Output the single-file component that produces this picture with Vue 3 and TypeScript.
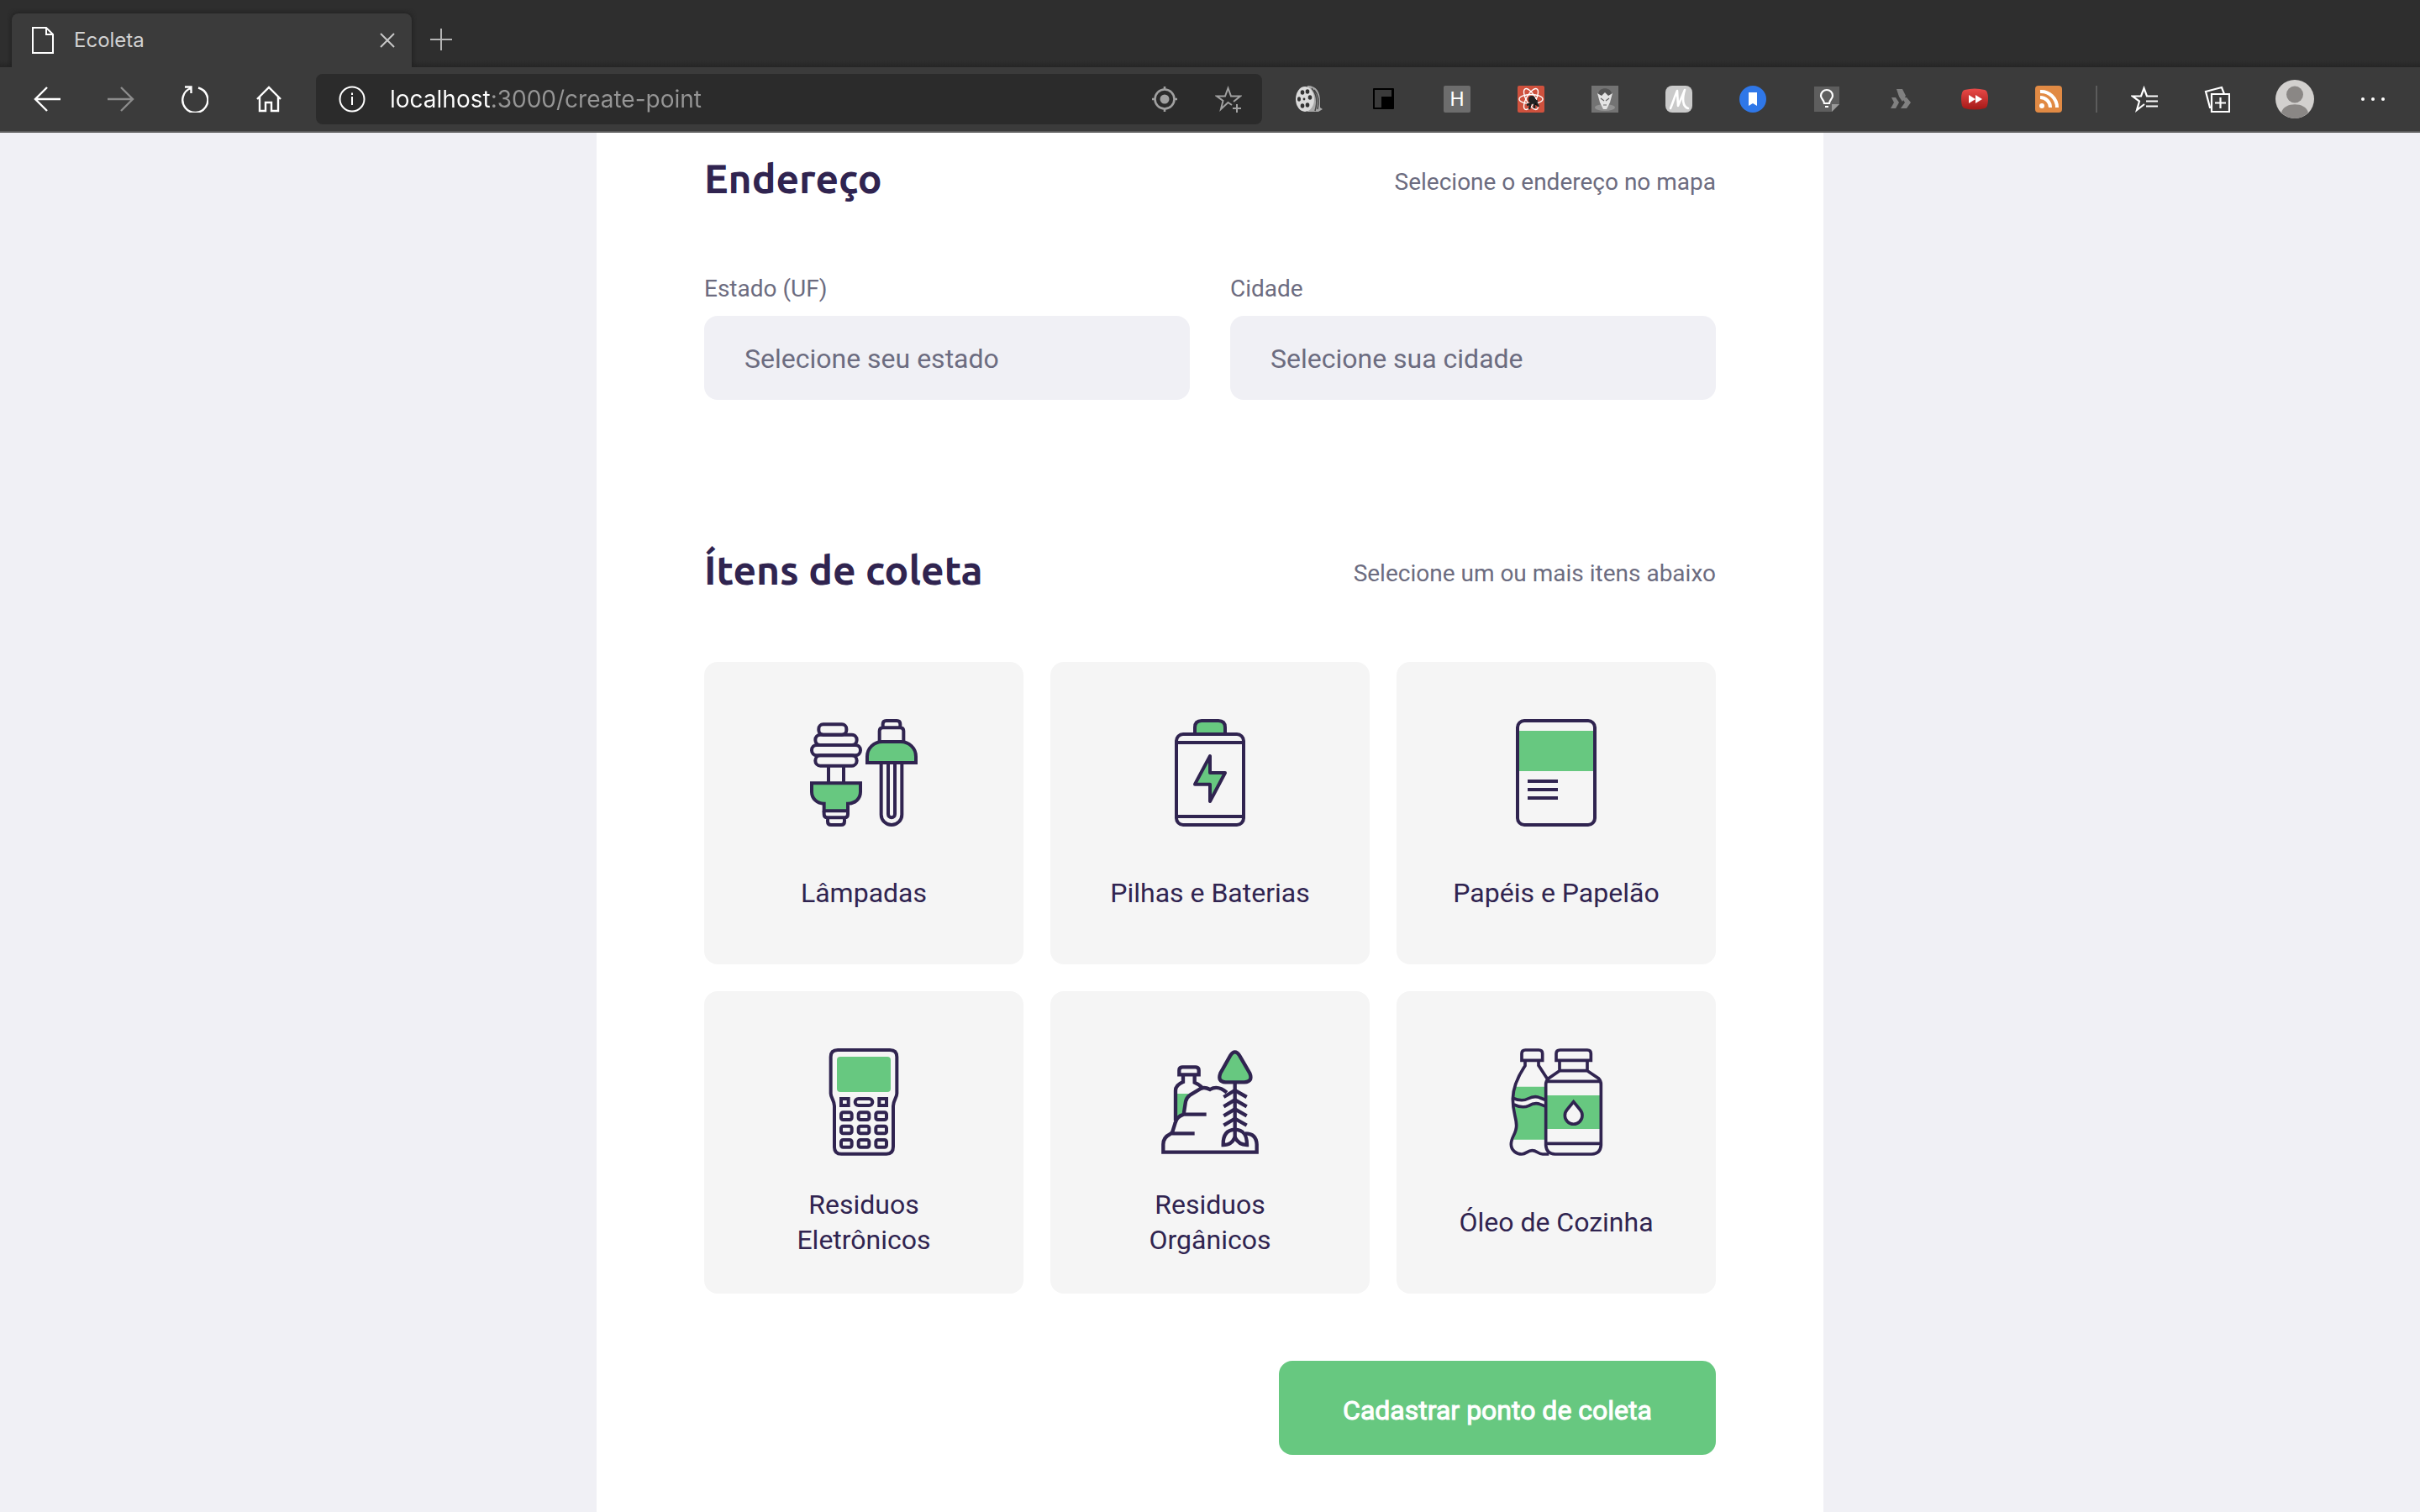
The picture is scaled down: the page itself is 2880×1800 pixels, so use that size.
<script setup lang="ts">
import { ref } from 'vue'

interface CollectItem {
  id: string
  title: string
  viewBox: string
  stroke: number
}

const items: CollectItem[] = [
  { id: 'lamps', title: 'Lâmpadas', viewBox: '132 108 384 384', stroke: 12 },
  { id: 'batteries', title: 'Pilhas e Baterias', viewBox: '78 108 384 384', stroke: 12 },
  { id: 'paper', title: 'Papéis e Papelão', viewBox: '84 108 384 384', stroke: 12 },
  { id: 'electronics', title: 'Residuos Eletrônicos', viewBox: '72 114 384 384', stroke: 12 },
  { id: 'organic', title: 'Residuos Orgânicos', viewBox: '78 114 384 384', stroke: 13 },
  { id: 'oil', title: 'Óleo de Cozinha', viewBox: '84 114 384 384', stroke: 11 },
]

const keyColumns = [183, 245, 307]
const keyRows = [343, 392, 441]
const ribs = [264, 298, 331, 365]

const url = ref('localhost:3000/create-point')
const uf = ref('')
const city = ref('')
</script>

<template>
  <div class="window">
    <header class="browser">
      <div class="tabs">
        <div class="tab">
          <svg class="page-icon" viewBox="0 0 26 32" fill="none" stroke="#fff" stroke-width="2"><path d="M1 1H17L25 9V31H1ZM17 1V9H25" /></svg>
          <span class="tab-title">Ecoleta</span>
          <button class="plain" type="button" aria-label="Fechar guia">
            <svg width="18" height="18" viewBox="0 0 18 18" stroke="#c8c8c8" stroke-width="2"><path d="M1 1L17 17M17 1L1 17" /></svg>
          </button>
        </div>
        <button class="plain new-tab" type="button" aria-label="Nova guia">
          <svg width="26" height="26" viewBox="0 0 26 26" stroke="#b4b4b4" stroke-width="2"><path d="M13 0V26M0 13H26" /></svg>
        </button>
      </div>

      <div class="toolbar">
        <nav class="nav">
          <button class="plain" type="button" aria-label="Voltar">
            <svg width="32" height="32" viewBox="0 0 32 32" fill="none" stroke="#fff" stroke-width="2.4"><path d="M32 16H2M16 2L2 16L16 30" /></svg>
          </button>
          <button class="plain" type="button" aria-label="Avançar">
            <svg width="32" height="32" viewBox="0 0 32 32" fill="none" stroke="#8c8c8c" stroke-width="2.4"><path d="M0 16H30M16 2L30 16L16 30" /></svg>
          </button>
          <button class="plain" type="button" aria-label="Atualizar">
            <svg width="32" height="32" viewBox="0 0 32 32" fill="none" stroke="#fff" stroke-width="2.4"><path d="M11 3A15 15 0 1 0 20 2.500M4 1.500H11.500V9" /></svg>
          </button>
          <button class="plain" type="button" aria-label="Início">
            <svg width="32" height="32" viewBox="0 0 32 32" fill="none" stroke="#fff" stroke-width="2.400"><path d="M2 16L16 2L30 16M5 13V30H12V20H19V30H27V13" /></svg>
          </button>
        </nav>

        <div class="address">
          <svg width="32" height="32" viewBox="0 0 32 32" fill="none" stroke="#fff" stroke-width="2"><circle cx="16" cy="16" r="14.500" /><path d="M16 13V23M16 8.500V11" /></svg>
          <input v-model="url" class="url" type="text" aria-label="Endereço da página" />
          <button class="plain" type="button" aria-label="Localização">
            <svg width="32" height="32" viewBox="0 0 32 32" fill="none" stroke="#a0a0a0" stroke-width="2.600"><circle cx="16" cy="16" r="11.500" /><circle cx="16" cy="16" r="5.500" fill="#a0a0a0" stroke="none" /><path d="M16 1V5M16 27V31M1 16H5M27 16H31" /></svg>
          </button>
          <button class="plain" type="button" aria-label="Adicionar aos favoritos">
            <svg width="32" height="32" viewBox="0 0 32 32" fill="none" stroke="#a0a0a0" stroke-width="2"><path d="M20 23L15.500 20L7 28L9.500 18L2 12.500H12L15.500 3L19 12.500H30L22 19M26 22V32M21 27H31" /></svg>
          </button>
        </div>

        <div class="extensions">
          <button class="plain" type="button" aria-label="Filmes">
            <svg width="32" height="32" viewBox="0 0 32 32"><path d="M14 0C25 0 29 8 29 18V26L32 28L27 31H14Z" fill="#a8a8a8" /><path d="M19 3C25 10 26 20 23 30M22 5C28 12 28 20 26 28" fill="none" stroke="#444" stroke-width="1.500" /><ellipse cx="11" cy="16" rx="11" ry="15" fill="#dadada" /><g fill="#333"><ellipse cx="8" cy="8" rx="2.300" ry="2.800" /><ellipse cx="14" cy="7" rx="2.300" ry="2.800" /><ellipse cx="4" cy="16" rx="2" ry="2.800" /><ellipse cx="17" cy="14" rx="2.300" ry="2.800" /><ellipse cx="8" cy="24" rx="2.300" ry="2.800" /><ellipse cx="14" cy="23" rx="2.300" ry="2.800" /><circle cx="10" cy="16" r="1.400" /></g></svg>
          </button>
          <button class="plain" type="button" aria-label="Painel">
            <svg width="32" height="32" viewBox="0 0 32 32"><rect x="4" y="3" width="25" height="25" rx="1" fill="#000" /><path d="M6 5H26V13H14V26H6Z" fill="#3b3b3b" /></svg>
          </button>
          <button class="plain letter" type="button">H</button>
          <button class="plain" type="button" aria-label="React">
            <svg width="32" height="32" viewBox="0 0 32 32"><rect width="32" height="32" rx="2" fill="#cf513d" /><g fill="none" stroke="#fff" stroke-width="1.400"><ellipse cx="16" cy="16" rx="14" ry="5.500" /><ellipse cx="16" cy="16" rx="14" ry="5.500" transform="rotate(60 16 16)" /><ellipse cx="16" cy="16" rx="14" ry="5.500" transform="rotate(120 16 16)" /></g><path d="M13 18L21 17L25 25M16 19L14 28M20 19L20 27M11 23L24 18" stroke="#222" stroke-width="2.500" /><circle cx="17" cy="16" r="4" fill="#222" /></svg>
          </button>
          <button class="plain" type="button" aria-label="Máscara">
            <svg width="32" height="32" viewBox="0 0 32 32"><rect width="32" height="32" fill="#737373" /><ellipse cx="16" cy="26" rx="12" ry="4" fill="#929292" /><path d="M8 10C8 1 24 1 24 10L22 19H10Z" fill="#555" /><path d="M7 9L12 12L16 8L20 12L25 9L22 20L18 28H14L10 20Z" fill="#e4e4e4" /><path d="M11 15L15 18M21 15L17 18M14 23H18" stroke="#666" stroke-width="1.200" /></svg>
          </button>
          <button class="plain" type="button" aria-label="Notas">
            <svg width="32" height="32" viewBox="0 0 32 32"><rect width="32" height="32" rx="8" fill="#cacaca" /><path d="M6 27C9 20 11 13 14 6L15 24L23 5C20 15 20 25 27 27" fill="none" stroke="#fff" stroke-width="2.600" stroke-linejoin="round" stroke-linecap="round" /></svg>
          </button>
          <button class="plain" type="button" aria-label="Marcadores">
            <svg width="32" height="32" viewBox="0 0 32 32"><circle cx="16" cy="16" r="16" fill="#2f77e8" /><path d="M11 8H21V24L16 21L11 24Z" fill="#fff" /></svg>
          </button>
          <button class="plain" type="button" aria-label="Ideias">
            <svg width="32" height="32" viewBox="0 0 32 32"><path d="M1 1H31V22L22 31H1Z" fill="#5e5e5e" /><path d="M22 31V22H31Z" fill="#999" /><path d="M13 21C13 17 9 16 9 12A7 7 0 0 1 23 12C23 16 19 17 19 21ZM14 25H18" fill="none" stroke="#fff" stroke-width="2.200" /></svg>
          </button>
          <button class="plain" type="button" aria-label="Fluxo">
            <svg width="32" height="32" viewBox="0 0 32 32" fill="#808080"><path d="M11 4H18L22 12L18 19L14 13Z" /><path d="M5 14H10L14 20L10 27H4L8 20ZM17 14H23L28 20L23 27H16L21 20Z" /></svg>
          </button>
          <button class="plain" type="button" aria-label="Avançar vídeo">
            <svg width="32" height="32" viewBox="0 0 32 32"><defs><linearGradient id="red" x2="0" y2="1"><stop stop-color="#e94a48" /><stop offset="1" stop-color="#a31917" /></linearGradient></defs><path d="M4 5Q16 2 28 5Q32 6 32 16Q32 26 28 27Q16 30 4 27Q0 26 0 16Q0 6 4 5Z" fill="url(#red)" /><path d="M9 11L17 16L9 21ZM17 11L25 16L17 21Z" fill="#fff" /></svg>
          </button>
          <button class="plain" type="button" aria-label="RSS">
            <svg width="32" height="32" viewBox="0 0 32 32"><rect width="32" height="32" rx="4" fill="#e18a44" /><g fill="none" stroke="#fff" stroke-width="4"><path d="M6 14A12 12 0 0 1 18 26M6 7A19 19 0 0 1 26 26" /></g><circle cx="8" cy="24" r="3" fill="#fff" /></svg>
          </button>
        </div>

        <div class="divider"></div>

        <div class="actions">
          <button class="plain" type="button" aria-label="Favoritos">
            <svg width="32" height="32" viewBox="0 0 32 32" fill="none" stroke="#fff" stroke-width="2.200"><path d="M32 12.500H19L15.500 3L12 12.500H2L10 18.500L7 29L16 22M18 18.500H32M18 24.500H32" /></svg>
          </button>
          <button class="plain" type="button" aria-label="Coleções">
            <svg width="32" height="32" viewBox="-2 0 32 32" fill="none" stroke="#fff" stroke-width="2.200"><path d="M8 10H29V31H8ZM18.500 14V27M12 20.500H25M8 26L6 26L1 7L20 2L23 10" /></svg>
          </button>
          <button class="plain" type="button" aria-label="Perfil">
            <svg width="46" height="46" viewBox="0 0 46 46"><circle cx="23" cy="23" r="23" fill="#d2d0ce" /><circle cx="23" cy="17.500" r="10" fill="#8a8785" /><path d="M7 39C10 26 36 26 39 39Q32 46 23 46Q14 46 7 39Z" fill="#8a8785" /></svg>
          </button>
          <button class="plain" type="button" aria-label="Mais">
            <svg width="32" height="32" viewBox="0 0 32 32" fill="#fff"><circle cx="4" cy="16" r="2" /><circle cx="16" cy="16" r="2" /><circle cx="28" cy="16" r="2" /></svg>
          </button>
        </div>
      </div>
    </header>

    <main class="page">
      <form class="form" @submit.prevent>
        <section>
          <div class="heading">
            <h2>Endereço</h2>
            <span>Selecione o endereço no mapa</span>
          </div>
          <div class="fields">
            <div class="field">
              <label for="uf">Estado (UF)</label>
              <select id="uf" v-model="uf">
                <option value="">Selecione seu estado</option>
              </select>
            </div>
            <div class="field">
              <label for="city">Cidade</label>
              <select id="city" v-model="city">
                <option value="">Selecione sua cidade</option>
              </select>
            </div>
          </div>
        </section>

        <section>
          <div class="heading">
            <h2>Ítens de coleta</h2>
            <span>Selecione um ou mais itens abaixo</span>
          </div>
          <div class="items">
            <button v-for="item in items" :key="item.id" class="item" type="button">
              <svg class="item-icon" :viewBox="item.viewBox" :stroke-width="item.stroke">
                <g v-if="item.id === 'lamps'">
                  <rect x="163" y="127" width="99" height="37" rx="16" />
                  <rect x="151" y="164" width="148" height="37" rx="18" />
                  <rect x="138" y="201" width="174" height="37" rx="18" />
                  <rect x="151" y="238" width="148" height="37" rx="18" />
                  <path d="M198 275V337M252 275V337" />
                  <path class="green" d="M138 337H312V368C312 392 293 410 267 410V436H182V410C157 410 138 392 138 368Z" />
                  <path d="M182 436V448Q182 460 194 460H256Q267 460 267 448V436M195 460V474Q195 486 207 486H243Q255 486 255 474V460" />
                  <path d="M392 139V126Q392 114 404 114H442Q454 114 454 126V139M380 188V151Q380 139 392 139H454Q466 139 466 151V188" />
                  <path class="green" d="M336 264V242C336 212 360 189 390 189H456C486 189 510 212 510 242V264Z" />
                  <path d="M386 264V449A37 37 0 0 0 460 449V264M411 264V448A12 12 0 0 0 435 448V264" />
                </g>
                <g v-else-if="item.id === 'batteries'">
                  <path class="green" d="M216 162V138Q216 114 240 114H300Q324 114 324 138V162" />
                  <rect x="150" y="162" width="240" height="324" rx="24" />
                  <path d="M150 192H390M150 456H390" />
                  <path class="green" stroke-linejoin="round" d="M270 240V300H324L270 402V341H216Z" />
                </g>
                <g v-else-if="item.id === 'paper'">
                  <rect class="green bare" x="138" y="150" width="276" height="144" />
                  <rect x="138" y="114" width="276" height="372" rx="24" />
                  <path d="M174 330H282M174 360H282M174 390H282" />
                </g>
                <g v-else-if="item.id === 'electronics'">
                  <path d="M171 120H357Q382 120 382 145V275C382 290 369 300 369 320V465Q369 491 345 491H184Q159 491 159 467V320C159 300 146 290 146 275V145Q146 120 171 120Z" />
                  <rect class="green bare" x="168" y="144" width="192" height="126" rx="12" />
                  <rect x="183" y="294" width="26" height="24" />
                  <rect x="319" y="294" width="26" height="24" />
                  <rect x="233" y="294" width="62" height="24" rx="12" />
                  <template v-for="y in keyRows" :key="y">
                    <rect v-for="x in keyColumns" :key="x" :x="x" :y="y" width="38" height="26" rx="7" />
                  </template>
                </g>
                <g v-else-if="item.id === 'organic'">
                  <path class="green bare" d="M153 276H196Q182 285 180 300Q178 330 174 346L153 357Z" />
                  <path d="M160 208V193Q160 181 172 181H218Q230 181 230 193V208ZM174 208V234Q147 245 147 265V372M215 208V236Q232 243 240 252" />
                  <path d="M330 272Q298 244 270 261Q250 251 237 258L200 280Q186 290 183 304L176 350Q151 358 146 380L136 412Q133 417 128 420Q103 432 103 457V485H437V457Q435 418 396 418M176 350H257M133 418H215" />
                  <path class="green" d="M343 139Q359 115 375 139L412 203Q424 233 393 235H325Q296 233 307 203Z" />
                  <path d="M359 235V432" />
                  <path v-for="y in ribs" :key="y" :d="`M319 ${y + 24}L359 ${y}L401 ${y + 24}`" />
                  <path d="M359 432C350 450 340 459 317 459C316 430 325 406 359 404C395 406 402 430 402 459C380 459 368 450 359 432Z" />
                </g>
                <g v-else>
                  <path class="green bare" d="M131 251H240V440H124C134 415 136 395 132 370C122 330 122 290 131 251Z" />
                  <path class="blank" d="M119 291Q153 306 175 294Q200 281 219 291L242 300V323L219 314Q200 306 178 319Q155 329 125 315" />
                  <path d="M153 157V133Q153 120 166 120H214Q227 120 227 133V157ZM213 157V175L245 224" />
                  <path d="M165 157V176Q122 240 121 295C121 345 134 360 134 390C134 420 115 430 115 457C115 480 135 492 153 492C170 492 172 479 190 479C208 479 210 492 228 492H250" />
                  <rect class="green bare" x="239" y="282" width="197" height="120" />
                  <path d="M276 157V133Q276 120 290 120H387Q400 120 400 133V157ZM288 157V194H387V157M288 194L248 222Q239 230 239 243V460Q241 490 272 492H403Q434 490 436 460V243Q436 230 428 222L387 194M243 232H432M239 454H436" />
                  <path class="blank" d="M338 305L361 333A31 31 0 1 1 315 333Z" />
                </g>
              </svg>
              <span class="item-title">{{ item.title }}</span>
            </button>
          </div>
        </section>

        <button class="submit" type="submit">Cadastrar ponto de coleta</button>
      </form>
    </main>
  </div>
</template>

<style>
body {
  margin: 0;
  background: #f0f0f5;
}
</style>

<style scoped>
* {
  box-sizing: border-box;
}

.window {
  display: flex;
  flex-direction: column;
  min-height: 100vh;
  font-family: Roboto, sans-serif;
  color: #302450;
}

svg {
  display: block;
  flex: none;
}

.plain {
  display: block;
  padding: 0;
  border: 0;
  background: none;
}

.browser {
  background: #3b3b3b;
  border-bottom: 2px solid #5c5c5c;
}

.tabs {
  display: flex;
  align-items: flex-end;
  height: 80px;
  padding-left: 14px;
  background: linear-gradient(#2e2e2e 72px, #252525);
}

.tab {
  display: flex;
  align-items: center;
  width: 476px;
  height: 64px;
  padding: 0 20px 0 24px;
  border-radius: 8px 8px 0 0;
  background: #3b3b3b;
  box-shadow: 0 0 6px #1c1c1c;
  clip-path: inset(-6px -6px 0 -6px);
}

.page-icon {
  width: 26px;
  height: 32px;
}

.tab-title {
  flex: 1;
  padding-left: 24px;
  font: 24px/32px Inter, sans-serif;
  color: #d2d2d2;
}

.new-tab {
  margin: 0 0 20px 22px;
}

.toolbar {
  display: flex;
  align-items: center;
  height: 76px;
  padding-right: 40px;
}

.nav {
  display: flex;
  gap: 56px;
  padding: 0 40px;
}

.address {
  display: flex;
  flex: 1;
  align-items: center;
  gap: 44px;
  height: 60px;
  padding: 0 24px 0 27px;
  border-radius: 8px;
  background: #2b2b2b;
}

.url {
  flex: 1;
  min-width: 0;
  height: 40px;
  margin-left: -15px;
  padding: 0;
  border: 0;
  outline: 0;
  font: 28px/40px Inter, sans-serif;
  color: transparent;
  background: linear-gradient(90deg, #fff 121px, #969696 121px);
  -webkit-background-clip: text;
  background-clip: text;
}

.extensions {
  display: flex;
  gap: 56px;
  margin-left: 40px;
}

.letter {
  width: 32px;
  height: 32px;
  border-radius: 2px;
  background: #6d6d6d;
  font: 24px/32px Roboto, sans-serif;
  color: #fff;
}

.divider {
  width: 2px;
  height: 32px;
  margin: 0 40px;
  background: #5c5c5c;
}

.actions {
  display: flex;
  align-items: center;
  gap: 54px;
}

.page {
  display: flex;
  flex: 1;
  justify-content: center;
}

.form {
  display: flex;
  flex-direction: column;
  width: 1460px;
  max-width: 100%;
  padding: 26px 128px 68px;
  background: #fff;
}

.heading {
  display: flex;
  align-items: center;
  justify-content: space-between;
  height: 60px;
}

h2 {
  margin: 0;
  padding-bottom: 4px;
  font: 700 48px/56px Ubuntu, "Noto Sans", sans-serif;
}

.heading span,
label {
  font-size: 28px;
  line-height: 32px;
  color: #6c6c80;
}

.heading span {
  padding-top: 6px;
}

.fields {
  display: flex;
  gap: 48px;
  margin: 84px 0 174px;
}

.field {
  display: flex;
  flex: 1;
  flex-direction: column;
  gap: 16px;
}

select {
  appearance: none;
  height: 100px;
  padding: 2px 48px 0;
  border: 0;
  border-radius: 16px;
  background: #f0f0f5;
  font: 32px/40px Roboto, sans-serif;
  color: #6c6c80;
}

.items {
  display: grid;
  grid-template-columns: repeat(3, 1fr);
  gap: 32px;
  margin-top: 78px;
}

.item {
  display: flex;
  flex-direction: column;
  align-items: center;
  height: 360px;
  padding: 68px 52px 36px;
  border: 0;
  border-radius: 16px;
  background: #f5f5f5;
  font: 32px/42px Roboto, sans-serif;
  color: #302450;
}

.item-icon {
  width: 128px;
  height: 128px;
  fill: none;
  stroke: #302450;
}

.item-icon .green {
  fill: #67c880;
}

.item-icon .blank {
  fill: #f5f5f5;
}

.item-icon .bare {
  stroke: none;
}

.item-title {
  display: flex;
  flex: 1;
  align-items: center;
  margin-top: 30px;
}

.submit {
  align-self: flex-end;
  width: 520px;
  height: 112px;
  margin-top: 80px;
  padding: 6px 0 0;
  border: 0;
  border-radius: 16px;
  background: #67c880;
  font: 400 32px/40px Roboto, sans-serif;
  -webkit-text-stroke: 1px #fff;
  color: #fff;
}
</style>
